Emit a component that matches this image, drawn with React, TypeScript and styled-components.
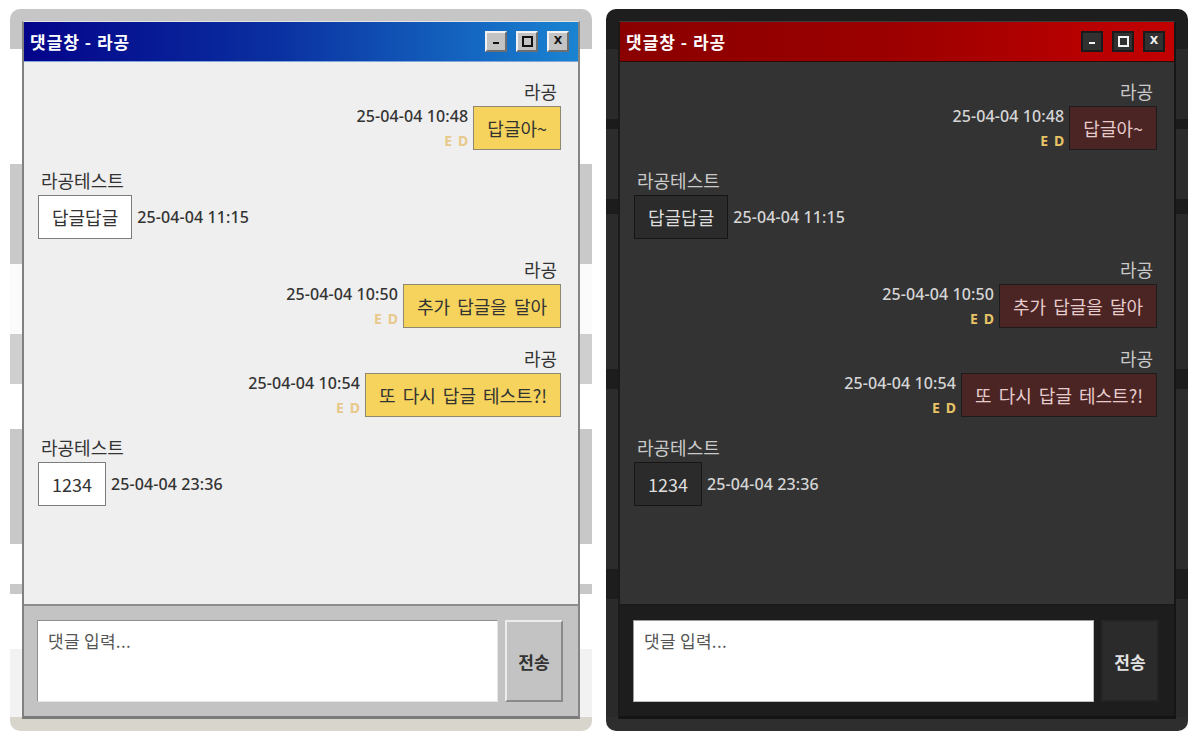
import React from 'react'
import styled, { createGlobalStyle, ThemeProvider } from 'styled-components'

type Skin = {
  backdrop: string
  frame: string
  titleBg: string
  titleEdge: string
  btnBg: string
  btnBevel: string
  btnInk: string
  body: string
  name: string
  time: string
  flags: string
  mineBg: string
  mineBorder: string
  mineInk: string
  otherBg: string
  otherBorder: string
  otherInk: string
  dock: string
  dockEdge: string
  fieldBorder: string
  sendBg: string
  sendBevel: string
  sendInk: string
}

const classic: Skin = {
  backdrop: `linear-gradient(180deg, #c6c6c6 0 40px, #ffffff 40px 155px, #c9c9c9 155px 255px,
    #fbfbfb 255px 325px, #cfcfcf 325px 375px, #ffffff 375px 420px, #c8c8c8 420px 535px,
    #ffffff 535px 575px, #c8c8c8 575px 585px, #ffffff 585px 640px, #f2f2f2 640px 708px, #d8d5cc 708px)`,
  frame: '#e4e4e4 #858585 #7a7a7a #808080',
  titleBg: 'linear-gradient(90deg, #04048a 0%, #0a2fa0 45%, #1a84d2 100%)',
  titleEdge: '#7fa6d8',
  btnBg: '#c3c3c3',
  btnBevel: '#f2f2f2 #6e6e6e #6e6e6e #f2f2f2',
  btnInk: '#111',
  body: '#efefef',
  name: '#333',
  time: '#333',
  flags: '#e8c98a',
  mineBg: '#f5d35c',
  mineBorder: '#8e8870',
  mineInk: '#333',
  otherBg: '#ffffff',
  otherBorder: '#7c7c7c',
  otherInk: '#333',
  dock: '#c3c3c3',
  dockEdge: '#8c8c8c',
  fieldBorder: '#8e8e8e #e6e6e6 #e6e6e6 #8e8e8e',
  sendBg: '#c3c3c3',
  sendBevel: '#ececec #8a8a8a #8a8a8a #ececec',
  sendInk: '#333',
}

const midnight: Skin = {
  backdrop: `linear-gradient(180deg, #1e1e1e 0 40px, #2a2a2a 40px 110px, #1b1b1b 110px 120px,
    #2c2c2c 120px 190px, #1c1c1c 190px 205px, #2b2b2b 205px 360px, #1d1d1d 360px 380px,
    #2c2c2c 380px 560px, #1d1d1d 560px 590px, #2a2a2a 590px 708px, #2e2e2e 708px)`,
  frame: '#3c3c3c #161616 #141414 #1a1a1a',
  titleBg: 'linear-gradient(90deg, #8a0000 0%, #9c0000 50%, #c40000 100%)',
  titleEdge: '#2a0a0a',
  btnBg: '#313131',
  btnBevel: '#1a1a1a #1a1a1a #1a1a1a #1a1a1a',
  btnInk: '#f2f2f2',
  body: '#333333',
  name: '#cacaca',
  time: '#d6d6d6',
  flags: '#e8c466',
  mineBg: '#4b2424',
  mineBorder: '#1c1c1c',
  mineInk: '#e6cccc',
  otherBg: '#2b2b2b',
  otherBorder: '#151515',
  otherInk: '#dedede',
  dock: '#1d1d1d',
  dockEdge: '#1a1a1a',
  fieldBorder: '#9a9a9a #bdbdbd #bdbdbd #9a9a9a',
  sendBg: '#2b2b2b',
  sendBevel: '#262626 #222 #222 #262626',
  sendInk: '#e2e2e2',
}

const GlobalStyle = createGlobalStyle`
  html, body { margin: 0; padding: 0; background: #ffffff; }
  body { font-family: 'Noto Sans CJK KR', 'Noto Sans', sans-serif; }
  * { box-sizing: border-box; }
`

const Page = styled.div`
  display: flex;
  gap: 14px;
  padding: 9px 10px;
  background: #ffffff;
`

const Shot = styled.div`
  width: 582px;
  height: 722px;
  padding: 12px;
  border-radius: 10px;
  overflow: hidden;
  display: flex;
  background: ${p => p.theme.backdrop};
`

const Window = styled.div`
  flex: 1;
  display: flex;
  flex-direction: column;
  border-style: solid;
  border-width: 1px 2px 3px 2px;
  border-color: ${p => p.theme.frame};
`

const TitleBar = styled.div`
  height: 40px;
  flex-shrink: 0;
  display: flex;
  align-items: center;
  justify-content: space-between;
  padding: 0 9px 0 6px;
  background: ${p => p.theme.titleBg};
  border-bottom: 1px solid ${p => p.theme.titleEdge};
`

const Title = styled.span`
  color: #ffffff;
  font-size: 17px;
  font-weight: 700;
  letter-spacing: 1px;
`

const Controls = styled.div`
  display: flex;
  gap: 9px;
`

const CtrlButton = styled.div<{ $top?: boolean }>`
  width: 22px;
  height: 21px;
  display: flex;
  justify-content: center;
  align-items: ${p => (p.$top ? 'flex-start' : 'center')};
  padding-top: ${p => (p.$top ? '2px' : '0')};
  background: ${p => p.theme.btnBg};
  border: 2px solid;
  border-color: ${p => p.theme.btnBevel};
  color: ${p => p.theme.btnInk};
  font-family: 'DejaVu Sans', sans-serif;
  font-size: 11px;
  font-weight: 700;
  line-height: 1;
`

const MinGlyph = styled.span`
  width: 6px;
  height: 2px;
  margin-top: 2px;
  background: ${p => p.theme.btnInk};
`

const MaxGlyph = styled.span`
  width: 11px;
  height: 11px;
  border: 2px solid ${p => p.theme.btnInk};
`

const Body = styled.div`
  flex: 1;
  display: flex;
  flex-direction: column;
  gap: 20px;
  padding: 19px 17px 0 14px;
  background: ${p => p.theme.body};
`

const Group = styled.div<{ $mine: boolean }>`
  display: flex;
  flex-direction: column;
  align-items: ${p => (p.$mine ? 'flex-end' : 'flex-start')};
  gap: 5px;
`

const Name = styled.div`
  padding: 0 4px 0 3px;
  font-size: 18px;
  line-height: 20px;
  color: ${p => p.theme.name};
`

const Row = styled.div<{ $mine: boolean }>`
  display: flex;
  align-items: ${p => (p.$mine ? 'stretch' : 'center')};
  gap: 5px;
`

const Meta = styled.div`
  display: flex;
  flex-direction: column;
  align-items: flex-end;
  justify-content: space-between;
  padding: 1px 0 1px;
`

const Stamp = styled.span`
  font-family: 'Noto Sans', 'Noto Sans CJK KR', sans-serif;
  font-size: 16px;
  font-weight: 500;
  line-height: 18px;
  letter-spacing: 0.1px;
  color: ${p => p.theme.time};
`

const Flags = styled.span`
  display: flex;
  gap: 6px;
  font-family: 'Noto Sans', sans-serif;
  font-size: 14px;
  font-weight: 700;
  line-height: 16px;
  color: ${p => p.theme.flags};
`

const Bubble = styled.div<{ $mine: boolean }>`
  height: 44px;
  display: flex;
  align-items: center;
  padding: 0 13px;
  white-space: nowrap;
  font-size: 18px;
  word-spacing: 3px;
  background: ${p => (p.$mine ? p.theme.mineBg : p.theme.otherBg)};
  border: 1.5px solid ${p => (p.$mine ? p.theme.mineBorder : p.theme.otherBorder)};
  color: ${p => (p.$mine ? p.theme.mineInk : p.theme.otherInk)};
`

const Dock = styled.div`
  height: 112px;
  flex-shrink: 0;
  display: flex;
  gap: 7px;
  padding: 14px 15px 14px 13px;
  background: ${p => p.theme.dock};
  border-top: 2px solid ${p => p.theme.dockEdge};
`

const Field = styled.textarea`
  flex: 1;
  height: 82px;
  resize: none;
  padding: 7px 10px;
  background: #ffffff;
  border: 1px solid;
  border-color: ${p => p.theme.fieldBorder};
  font-family: 'Noto Sans CJK KR', sans-serif;
  font-size: 17px;
  letter-spacing: 0.3px;
  outline: none;
  &::placeholder { color: #555; }
`

const Send = styled.button`
  width: 58px;
  height: 82px;
  padding: 0;
  background: ${p => p.theme.sendBg};
  border: 2px solid;
  border-color: ${p => p.theme.sendBevel};
  color: ${p => p.theme.sendInk};
  font-family: 'Noto Sans CJK KR', sans-serif;
  font-size: 17px;
  font-weight: 700;
`

type Reply = { author: string; mine: boolean; time: string; text: string }

const replies: Reply[] = [
  { author: '라공', mine: true, time: '25-04-04 10:48', text: '답글아~' },
  { author: '라공테스트', mine: false, time: '25-04-04 11:15', text: '답글답글' },
  { author: '라공', mine: true, time: '25-04-04 10:50', text: '추가 답글을 달아' },
  { author: '라공', mine: true, time: '25-04-04 10:54', text: '또 다시 답글 테스트?!' },
  { author: '라공테스트', mine: false, time: '25-04-04 23:36', text: '1234' },
]

const ReplyItem = ({ author, mine, time, text }: Reply) => (
  <Group $mine={mine}>
    <Name>{author}</Name>
    <Row $mine={mine}>
      {mine ? (
        <>
          <Meta>
            <Stamp>{time}</Stamp>
            <Flags><span>E</span><span>D</span></Flags>
          </Meta>
          <Bubble $mine>{text}</Bubble>
        </>
      ) : (
        <>
          <Bubble $mine={false}>{text}</Bubble>
          <Stamp>{time}</Stamp>
        </>
      )}
    </Row>
  </Group>
)

const CommentWindow = ({ skin }: { skin: Skin }) => (
  <ThemeProvider theme={skin}>
    <Shot>
      <Window>
        <TitleBar>
          <Title>댓글창 - 라공</Title>
          <Controls>
            <CtrlButton><MinGlyph /></CtrlButton>
            <CtrlButton><MaxGlyph /></CtrlButton>
            <CtrlButton $top>X</CtrlButton>
          </Controls>
        </TitleBar>
        <Body>
          {replies.map((r, i) => <ReplyItem key={i} {...r} />)}
        </Body>
        <Dock>
          <Field placeholder='댓글 입력...' />
          <Send>전송</Send>
        </Dock>
      </Window>
    </Shot>
  </ThemeProvider>
)

const App = () => (
  <>
    <GlobalStyle />
    <Page>
      <CommentWindow skin={classic} />
      <CommentWindow skin={midnight} />
    </Page>
  </>
)

export default App
